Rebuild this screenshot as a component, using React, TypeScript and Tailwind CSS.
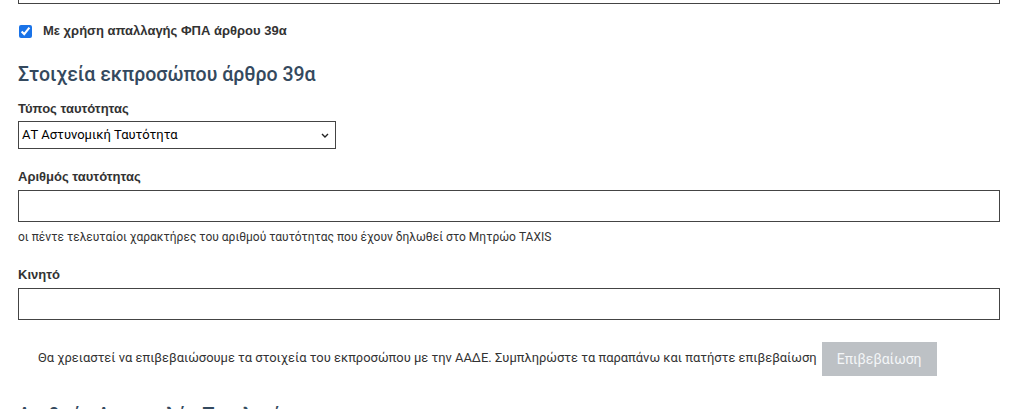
export default function App() {
  return (
    <div className="relative h-[409px] overflow-hidden bg-white font-['Roboto',sans-serif] text-[#333]">
      <div className="mt-[-29px] pl-[18px] pr-[32px]">
        <div className="h-[33px] border border-[#444] border-t-0" />

        <label className="mt-[19px] flex items-center gap-[11px] pl-[1px]">
          <input type="checkbox" defaultChecked className="m-0 h-[13px] w-[13px] accent-[#1a73e8]" />
          <span className="font-['Liberation_Sans',Arial,sans-serif] text-[13px] font-bold leading-[16px] text-[#333]">
            Με χρήση απαλλαγής ΦΠΑ άρθρου 39α
          </span>
        </label>

        <h2 className="mt-[25px] text-[19.5px] font-medium leading-[22px] text-[#34495e]">
          Στοιχεία εκπροσώπου άρθρο 39α
        </h2>

        <div className="mt-[15px] font-['Liberation_Sans',Arial,sans-serif] text-[13px] font-bold leading-[16px] text-[#333]">
          Τύπος ταυτότητας
        </div>
        <div className="relative mt-[4px] flex h-[28px] w-[318px] items-center border border-[#444] px-[3px] text-[13px] text-black">
          <span>ΑΤ Αστυνομική Ταυτότητα</span>
          <svg className="absolute right-[6px] top-[11px]" width="8" height="5" viewBox="0 0 8 5">
            <path d="M1 1l3 3 3-3" fill="none" stroke="#222" strokeWidth="1.4" />
          </svg>
        </div>

        <div className="mt-[20px] font-['Liberation_Sans',Arial,sans-serif] text-[13px] font-bold leading-[16px] text-[#333]">
          Αριθμός ταυτότητας
        </div>
        <div className="mt-[5px] h-[32px] border border-[#444]" />
        <div className="mt-[8px] text-[12px] leading-[14px] text-[#333]">
          οι πέντε τελευταίοι χαρακτήρες του αριθμού ταυτότητας που έχουν δηλωθεί στο Μητρώο TAXIS
        </div>

        <div className="mt-[23px] font-['Liberation_Sans',Arial,sans-serif] text-[13px] font-bold leading-[16px] text-[#333]">
          Κινητό
        </div>
        <div className="mt-[5px] h-[32px] border border-[#444]" />

        <div className="mt-[22px] flex items-center pl-[20px]">
          <span className="mt-[-3px] text-[12.95px] text-[#333]">
            Θα χρειαστεί να επιβεβαιώσουμε τα στοιχεία του εκπροσώπου με την ΑΑΔΕ. Συμπληρώστε τα παραπάνω και πατήστε επιβεβαίωση
          </span>
          <button className="ml-[5px] h-[34px] w-[115px] bg-[#bdc1c5] text-[14px] text-[#f4f6f8]">
            Επιβεβαίωση
          </button>
        </div>

        <h2 className="mt-[29px] text-[19.5px] font-medium leading-[22px] text-[#34495e]">
          Αριθμός Αποστολής Τιμολογίων
        </h2>
      </div>
    </div>
  );
}
